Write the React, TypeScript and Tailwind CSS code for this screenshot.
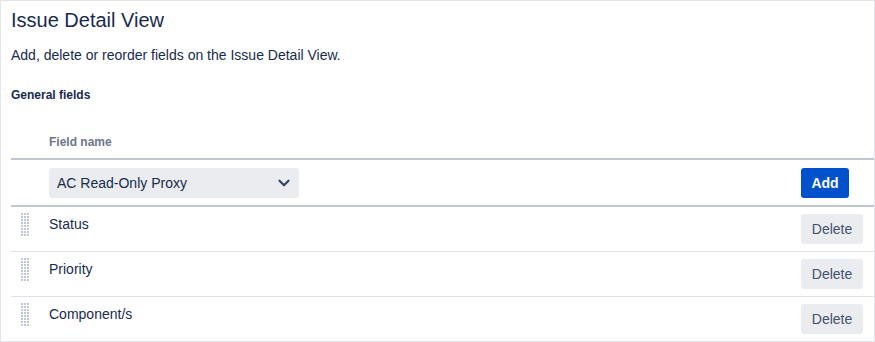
import { ChevronDown } from "lucide-react";

const fields = ["Status", "Priority", "Component/s"];

function DragHandle() {
  const dots = [];
  for (let r = 0; r < 8; r++) {
    for (let c = 0; c < 3; c++) {
      dots.push(<rect key={`${r}-${c}`} x={c * 3} y={r * 3} width={2} height={2} fill="#c1c7d0" />);
    }
  }
  return (
    <svg width="8" height="24" viewBox="0 0 8 24" className="mt-[-1px]">
      {dots}
    </svg>
  );
}

export default function App() {
  return (
    <div
      className="w-[875px] h-[342px] border border-[#e4e5e8] bg-white text-[#172b4d] overflow-hidden"
      style={{ fontFamily: "'Liberation Sans', Arial, sans-serif" }}
    >
      <div className="pl-[10px] pt-[7px]">
        <h1 className="text-[20px] leading-6 font-normal text-[#172b4d]">Issue Detail View</h1>
        <p className="mt-[13px] text-[14px] leading-5">
          Add, delete or reorder fields on the Issue Detail View.
        </p>
        <h3 className="mt-[22px] text-[12px] leading-4 font-semibold">General fields</h3>

        {/* Table */}
        <div className="mt-[31px]">
          <div className="flex border-b-2 border-[#c1c7d0] pb-2">
            <div className="w-[38px]" />
            <div className="text-[12px] leading-4 font-semibold text-[#6b778c]">Field name</div>
          </div>

          <div className="flex items-center border-b-2 border-[#c1c7d0] pt-2 pb-[7px]">
            <div className="w-[38px]" />
            <button className="flex items-center justify-between w-[250px] h-[30px] rounded-[3px] bg-[#ebecf0] pl-2 pr-[6px] text-[14px] text-[#172b4d]">
              <span>AC Read-Only Proxy</span>
              <ChevronDown size={18} strokeWidth={3} className="text-[#344563]" />
            </button>
            <div className="flex-1" />
            <button className="w-[48px] h-[30px] mr-[25px] rounded-[3px] bg-[#0052cc] text-white text-[14px] font-bold">
              Add
            </button>
          </div>

          {fields.map((f, i) => (
            <div
              key={f}
              className={`flex items-start pt-[7px] pb-[7px] ${i < fields.length - 1 ? "border-b border-[#dfe1e6]" : ""}`}
            >
              <div className="w-[38px] pl-[10px]">
                <DragHandle />
              </div>
              <div className="flex-1 text-[14px] leading-5">{f}</div>
              <button className="w-[62px] h-[30px] mr-[11px] rounded-[3px] bg-[#ebecf0] text-[#42526e] text-[14px]">
                Delete
              </button>
            </div>
          ))}
        </div>
      </div>
    </div>
  );
}
